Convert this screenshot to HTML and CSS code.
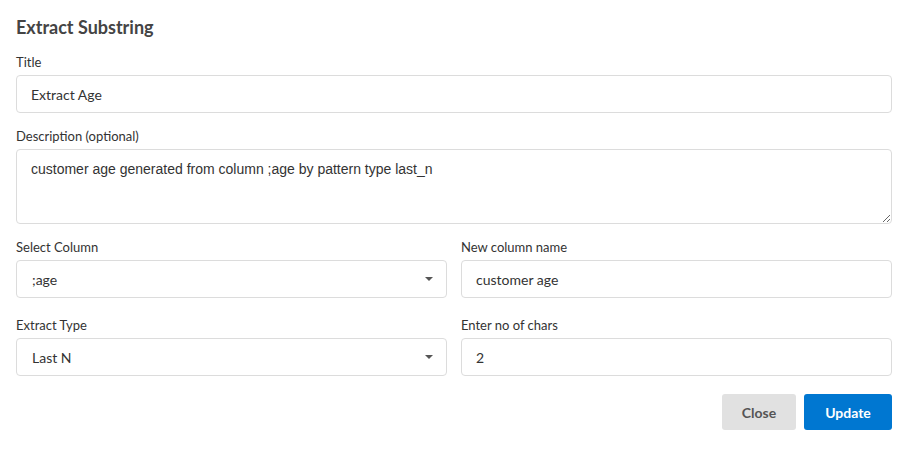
FILE: index.html
```html
<!DOCTYPE html>
<html>
<head>
<meta charset="utf-8">
<link rel="stylesheet" href="styles.css">
</head>
<body>
<div class="dialog">
  <h2 class="heading">Extract Substring</h2>
  <div class="field">
    <label class="label">Title</label>
    <input class="control" type="text" value="Extract Age">
  </div>
  <div class="field">
    <label class="label">Description (optional)</label>
    <textarea class="control area">customer age generated from column ;age by pattern type last_n</textarea>
  </div>
  <div class="grid">
    <div class="field">
      <label class="label">Select Column</label>
      <div class="select-wrap">
        <select class="control select"><option>;age</option></select>
        <span class="caret"></span>
      </div>
    </div>
    <div class="field">
      <label class="label">New column name</label>
      <input class="control" type="text" value="customer age">
    </div>
    <div class="field field-last">
      <label class="label">Extract Type</label>
      <div class="select-wrap">
        <select class="control select"><option>Last N</option></select>
        <span class="caret"></span>
      </div>
    </div>
    <div class="field field-last">
      <label class="label">Enter no of chars</label>
      <input class="control" type="text" value="2">
    </div>
  </div>
  <div class="actions">
    <button class="btn btn-close">Close</button>
    <button class="btn btn-primary">Update</button>
  </div>
</div>
</body>
</html>
```
FILE: styles.css
```css
* { box-sizing: border-box; }
html, body { margin: 0; padding: 0; background: #fff; }
body { font-family: Lato, "Open Sans", sans-serif; color: #333; }
.dialog { padding: 14px 15px 16px 16px; }
.heading {
  margin: 0 0 14px 0;
  font-size: 18px;
  line-height: 26px;
  font-weight: 700;
  color: #444;
}
.field { display: flex; flex-direction: column; margin-bottom: 15px; }
.label {
  font-size: 13px;
  line-height: 16px;
  color: #333;
  margin-bottom: 5px;
}
.control {
  display: block;
  width: 100%;
  height: 38px;
  border: 1px solid #dcdcdc;
  border-radius: 4px;
  padding: 0 14px;
  font-family: Lato, sans-serif;
  font-size: 14px;
  color: #333;
  background: #fff;
  outline: none;
  margin: 0;
}
.area {
  height: 75px;
  padding: 10px 14px;
  font-family: "Liberation Sans", Arial, sans-serif;
  font-size: 14px;
  line-height: 18px;
  resize: vertical;
}
.grid {
  display: grid;
  grid-template-columns: 1fr 1fr;
  column-gap: 14px;
}
.grid .field { margin-bottom: 19px; }
.grid .field-last { margin-bottom: 18px; }
.select-wrap { position: relative; }
.select { appearance: none; -webkit-appearance: none; padding-left: 15px; }
.caret {
  position: absolute;
  right: 14px;
  top: 17px;
  width: 0;
  height: 0;
  border-left: 4px solid transparent;
  border-right: 4px solid transparent;
  border-top: 4px solid #555;
}
.actions { display: flex; justify-content: flex-end; gap: 8px; }
.btn {
  height: 36px;
  border: none;
  border-radius: 3px;
  font-family: Lato, sans-serif;
  font-size: 14px;
  font-weight: 700;
  padding: 0;
}
.btn-close { width: 74px; background: #e1e1e1; color: #555; }
.btn-primary { width: 88px; background: #0077d1; color: #fff; }
```
